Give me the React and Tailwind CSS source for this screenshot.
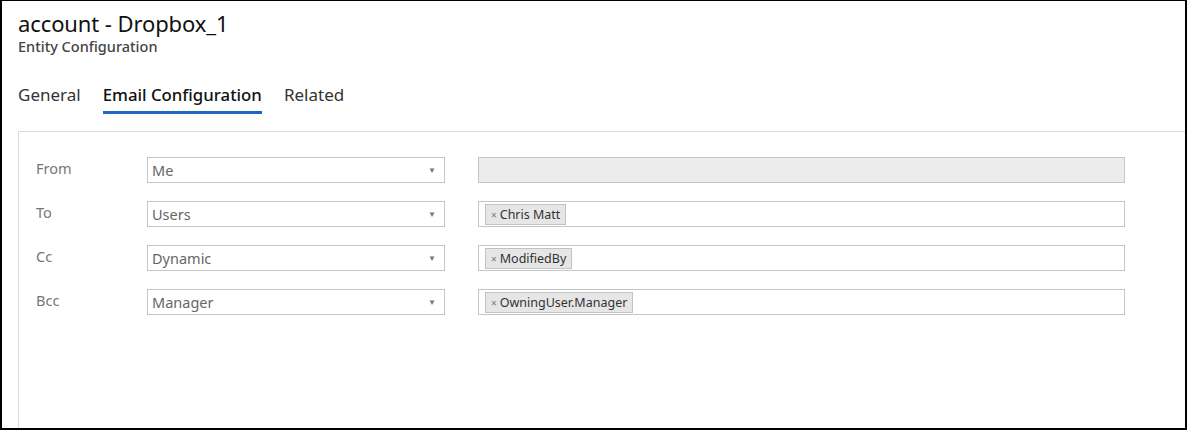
import React from "react";

const rows = [
    { label: "From", value: "Me", tag: null, disabled: true },
    { label: "To", value: "Users", tag: "Chris Matt" },
    { label: "Cc", value: "Dynamic", tag: "ModifiedBy" },
    { label: "Bcc", value: "Manager", tag: "OwningUser.Manager" },
];

const tabs = ["General", "Email Configuration", "Related"];

const App = () => {
    return (
        <div
            className="w-[1187px] h-[430px] bg-white border-t border-r-2 border-b-2 border-l-2 border-black flex flex-col overflow-hidden"
            style={{ fontFamily: '"Noto Sans", "Open Sans", sans-serif' }}
        >
            {/* Header */}
            <div className="pl-[16px] pt-[8px]">
                <h1 className="text-[22px] leading-[28px] text-[#111] tracking-[-0.1px]">account - Dropbox_1</h1>
                <p className="text-[14.5px] leading-[20px] font-medium text-[#444] -mt-[1px]">Entity Configuration</p>
            </div>

            {/* Tabs */}
            <div className="flex pl-[16px] mt-[27px] gap-[22px]">
                {tabs.map((t, i) => (
                    <div key={t} className="flex flex-col">
                        <span
                            className={
                                i === 1
                                    ? "text-[16.8px] leading-[24px] font-medium text-[#111]"
                                    : "text-[17px] leading-[24px] text-[#333]"
                            }
                        >
                            {t}
                        </span>
                        <div className={i === 1 ? "h-[3px] mt-[4px] bg-[#2266c4]" : "h-[3px] mt-[4px]"} />
                    </div>
                ))}
            </div>

            {/* Panel */}
            <div className="ml-[16px] mt-[17px] flex-1 border-l border-t border-[#dadada]">
                <div className="pt-[25px] flex flex-col gap-[18px]">
                    {rows.map((r) => (
                        <div key={r.label} className="flex items-start">
                            <div className="w-[128px] pl-[17px] text-[14.5px] leading-[20px] text-[#777] mt-[1px]">
                                {r.label}
                            </div>
                            <div className="w-[298px] h-[26px] border border-[#c6c6c6] flex items-center justify-between pl-[4px] pr-[8px]">
                                <span className="text-[14.5px] text-[#666] mt-[2px]">{r.value}</span>
                                <span className="text-[8px] text-[#777]">▼</span>
                            </div>
                            <div
                                className={
                                    r.disabled
                                        ? "ml-[33px] w-[647px] h-[26px] border border-[#c6c6c6] bg-[#ececec]"
                                        : "ml-[33px] w-[647px] h-[26px] border border-[#c6c6c6] bg-white flex items-end pl-[6px] pb-[1px]"
                                }
                            >
                                {r.tag && (
                                    <div className="h-[21px] border border-[#c2c2c2] bg-[#e6e6e6] flex items-center px-[5px] gap-[3px]">
                                        <span className="text-[10px] text-[#777] mt-[2px]">×</span>
                                        <span className="text-[12.5px] text-[#333] mt-[2px]">{r.tag}</span>
                                    </div>
                                )}
                            </div>
                        </div>
                    ))}
                </div>
            </div>
        </div>
    );
};

export default App;
